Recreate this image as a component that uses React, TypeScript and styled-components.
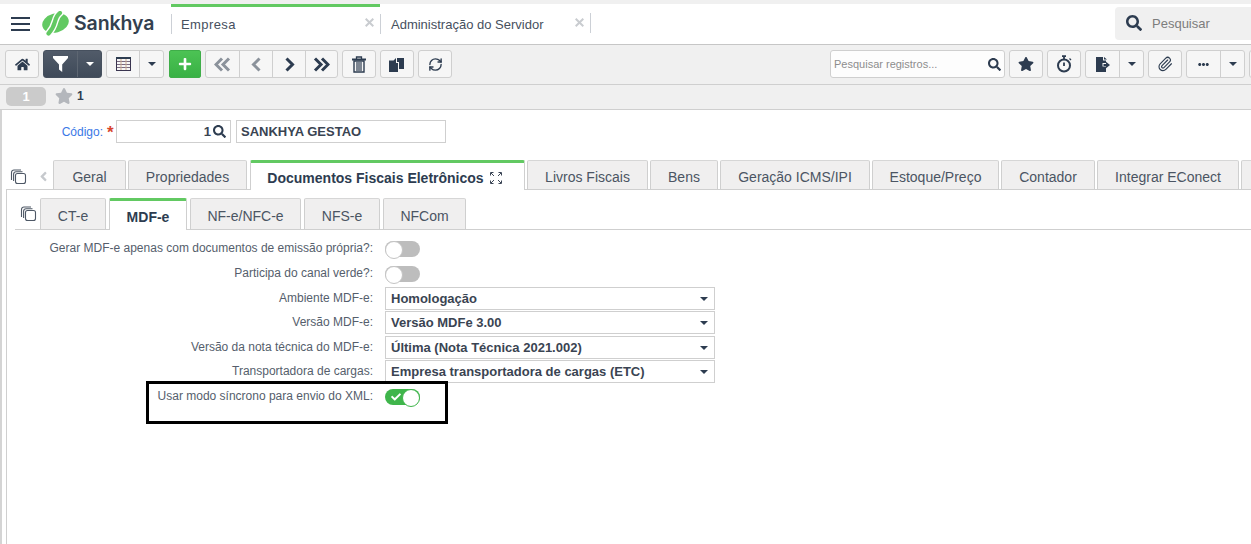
import React from "react";
import styled, { createGlobalStyle } from "styled-components";
import { FaHome, FaPlus, FaAngleLeft, FaStar, FaSearch, FaEllipsisH, FaCheck } from "react-icons/fa";
import { Paperclip, RefreshCw } from "lucide-react";

const Global = createGlobalStyle`
  html, body { margin: 0; padding: 0; background: #fff; }
  body { font-family: "Liberation Sans", Arial, sans-serif; overflow: hidden; }
  * { box-sizing: border-box; }
`;

const Page = styled.div`
  position: relative; width: 1251px; height: 544px; overflow: hidden; background: #fff;
  display: flex; flex-direction: column;
`;
const TopStrip = styled.div`height: 4px; background: #f0f0f0; flex: none;`;
const Header = styled.header`
  height: 41px; flex: none; background: #fff; border-bottom: 1px solid #c6c6c6;
  display: flex; align-items: center; padding-left: 11px;
`;
const Burger = styled.div`
  width: 19px; height: 14px; flex: none; margin-top: -1px;
  display: flex; flex-direction: column; justify-content: space-between;
  span { display: block; height: 2px; background: #2d3c50; }
`;
const Brand = styled.div`
  display: flex; align-items: center; margin-left: 12px; width: 129px; flex: none; gap: 5px; margin-top: -2px;
`;
const BrandName = styled.span`
  font-family: "Inter", "Liberation Sans", sans-serif; font-weight: 600; font-size: 19.5px; color: #33404f; letter-spacing: -0.1px;
`;
const AppTab = styled.div<{ $active?: boolean; $w: number; $pad: number }>`
  width: ${p => p.$w}px; height: 40px; flex: none; position: relative;
  display: flex; align-items: center; padding-left: ${p => p.$pad}px; padding-bottom: 2px;
  font-size: 13px; color: #46505e; letter-spacing: ${p => (p.$active ? "0.4px" : "0")};
  border-top: 3px solid ${p => (p.$active ? "#62c962" : "transparent")};
  &::before { content: ""; position: absolute; left: 0; top: 7px; height: 20px; width: 1px; background: #ccd0d6; }
`;
const AppTabClose = styled.span`
  position: absolute; right: 6px; top: 11px; display: flex; color: #c9ccd0;
`;
const AppTabEnd = styled.div`width: 1px; height: 20px; background: #ccd0d6; flex: none; margin-top: -3px;`;
const GlobalSearch = styled.div`
  margin-left: auto; width: 136px; height: 33px; background: #f0f0f0; border-radius: 4px 0 0 4px;
  display: flex; align-items: center; padding-left: 11px; gap: 10px; color: #7d7d7d; font-size: 13px; margin-top: -2px;
  svg { color: #2d3c50; font-size: 16px; }
`;
const Toolbar = styled.div`
  height: 40px; flex: none; background: #f0f0f0; border-bottom: 1px solid #cfcfcf;
  display: flex; align-items: flex-start; padding: 5px 0 0 5px; overflow: hidden;
`;
const Tool = styled.button<{ $w?: number; $gap?: number }>`
  width: ${p => p.$w ?? 34}px; height: 28px; flex: none; padding: 0; margin-left: ${p => p.$gap ?? 0}px;
  background: #f6f6f6; border: 1px solid #cfcfcf; border-radius: 3px; color: #2d3c50; font-size: 14px;
  display: flex; align-items: center; justify-content: center;
`;
const Split = styled.div<{ $gap?: number; $dark?: boolean }>`
  display: flex; flex: none; height: 28px; margin-left: ${p => p.$gap ?? 0}px; border-radius: 3px;
  background: ${p => (p.$dark ? "linear-gradient(#515b69, #3f4a59)" : "#f6f6f6")};
  border: 1px solid ${p => (p.$dark ? "#46505e" : "#cfcfcf")};
`;
const SplitCell = styled.div<{ $w: number; $dark?: boolean; $first?: boolean }>`
  width: ${p => p.$w}px; display: flex; align-items: center; justify-content: center; font-size: 14px;
  color: ${p => (p.$dark ? "#fff" : "#2d3c50")};
  border-left: ${p => (p.$first ? "none" : `1px solid ${p.$dark ? "#5d6672" : "#cfcfcf"}`)};
`;
const Caret = styled.i<{ $light?: boolean }>`
  display: block; width: 0; height: 0; border-left: 4.5px solid transparent; border-right: 4.5px solid transparent;
  border-top: 4.5px solid ${p => (p.$light ? "#fff" : "#2d3c50")};
`;
const AddButton = styled.button`
  width: 32px; height: 28px; flex: none; margin-left: 5px; padding: 0; border: 1px solid #3fae49; border-radius: 2px;
  background: linear-gradient(#4cc354, #39b145); color: #fff; font-size: 14px;
  display: flex; align-items: center; justify-content: center;
`;
const RecordSearch = styled.div`
  width: 175px; height: 28px; flex: none; margin-left: 378px; background: #fdfdfd; border: 1px solid #cfcfcf; border-radius: 3px;
  display: flex; align-items: center; justify-content: space-between; padding: 0 3px 0 3px;
  font-size: 11px; color: #8d8d8d; svg { color: #2d3c50; font-size: 13px; }
`;
const SubBar = styled.div`
  height: 25px; flex: none; background: #f0f0f0; border-bottom: 1px solid #cfcfcf;
  display: flex; align-items: center; padding-left: 6px; padding-bottom: 2px;
`;
const Pill = styled.div`
  width: 40px; height: 19px; background: #cbcbcb; border-radius: 5px; color: #fff; font-size: 13px;
  display: flex; align-items: center; justify-content: center; font-weight: bold;
`;
const Count = styled.span`
  display: flex; align-items: center; margin-left: 9px; gap: 4px; color: #2d3c50; font-size: 12px; font-weight: bold;
  svg { color: #b4b7bc; font-size: 18px; }
`;
const Content = styled.div`
  flex: 1; border-left: 2px solid #d4d4d4; display: flex; flex-direction: column; min-height: 0;
`;
const RecordRow = styled.div`
  display: flex; align-items: center; height: 23px; margin-top: 10px; flex: none;
`;
const CodeLabel = styled.label`
  width: 101px; text-align: right; font-size: 12px; color: #3a78e6;
`;
const Required = styled.span`
  width: 13px; color: #d8442e; font-size: 17px; font-weight: bold; line-height: 17px; height: 16px; padding-left: 4px;
`;
const Input = styled.div<{ $w: number; $gap?: number }>`
  width: ${p => p.$w}px; height: 23px; margin-left: ${p => p.$gap ?? 0}px; border: 1px solid #cfcfcf;
  display: flex; align-items: center; padding: 0 4px; font-size: 13px; font-weight: bold; color: #3a4452;
`;
const CodeInput = styled(Input)`
  justify-content: flex-end; gap: 2px; svg { font-size: 13px; color: #2d3c50; }
`;
const TabStrip = styled.div`
  display: flex; align-items: flex-end; height: 30px; margin-top: 17px; flex: none;
  border-bottom: 1px solid #cfcfcf; position: relative; margin-left: 4px; padding-left: 47px;
`;
const Tab = styled.div<{ $w: number; $active?: boolean; $gap?: number; $trail?: number }>`
  width: ${p => p.$w}px; flex: none; height: ${p => (p.$active ? 30 : 29)}px; margin-left: ${p => p.$gap ?? 2}px;
  display: flex; align-items: center; justify-content: center; padding-top: ${p => (p.$active ? 2 : 4)}px;
  padding-right: ${p => p.$trail ?? 0}px;
  font-size: 14px; color: ${p => (p.$active ? "#2d3c50" : "#4b5563")}; font-weight: ${p => (p.$active ? "bold" : "normal")};
  background: ${p => (p.$active ? "#fff" : "#f0efef")};
  border: 1px solid #cfcfcf; border-top: ${p => (p.$active ? "3px solid #62c962" : "1px solid #d6d6d6")};
  border-bottom: none; border-radius: 2px 2px 0 0; white-space: nowrap;
  margin-bottom: ${p => (p.$active ? "-1px" : "0")};
  svg { margin-left: 6px; }
`;
const StripIcons = styled.div`
  position: absolute; left: 4px; top: 8px; display: flex; align-items: center; gap: 9px;
`;
const ChevronMuted = styled.span`color: #c6c9cd; display: flex; font-size: 15px;`;
const Panel = styled.div`
  flex: 1; margin-left: 4px; border-left: 1px solid #cfcfcf; min-height: 0; display: flex; flex-direction: column;
`;
const SubStrip = styled(TabStrip)`
  height: 32px; margin-top: 8px; margin-left: 8px; padding-left: 25px;
`;
const SubTab = styled(Tab)`
  height: ${p => (p.$active ? 32 : 31)}px;
`;
const SubIcons = styled(StripIcons)`left: 5px; top: 7px;`;
const Fields = styled.div`padding-top: 7px; flex: none;`;
const FieldRow = styled.div<{ $h: number }>`
  height: ${p => p.$h}px; display: grid; grid-template-columns: 366px 330px; column-gap: 12px; align-items: start;
`;
const FieldLabel = styled.label`
  text-align: right; font-size: 12px; color: #555e6c; line-height: 23.5px; white-space: nowrap;
`;
const Select = styled.div`
  height: 23px; border: 1px solid #cfcfcf; background: #fff; display: flex; align-items: center; justify-content: space-between;
  padding: 0 6px 0 5px; font-size: 13px; font-weight: bold; color: #3a4452;
`;
const Switch = styled.div<{ $on?: boolean }>`
  position: relative; width: 35px; height: 16px; margin-top: 4px; border-radius: 8px;
  background: ${p => (p.$on ? "#3fb54b" : "#bdbdbd")};
  &::after {
    content: ""; position: absolute; top: 0; ${p => (p.$on ? "right: 0" : "left: 0")};
    width: 16px; height: 16px; border-radius: 50%; background: #fff; border: 1px solid ${p => (p.$on ? "#3fb54b" : "#c4c4c4")};
  }
  svg { position: absolute; left: 6px; top: 3px; color: #fff; font-size: 10px; }
`;
const Callout = styled.div`
  position: absolute; left: 146px; top: 381px; width: 302px; height: 43px; border: 3px solid #000; pointer-events: none;
`;

const GridIcon = () => (
  <svg width="15" height="14" viewBox="0 0 15 14" fill="none">
    <rect x="0.5" y="0.5" width="14" height="13" stroke="#3a3550" />
    <path d="M0 1h15" stroke="#2d3c50" strokeWidth="2" />
    <path d="M1 4.5h13M1 7.5h13M1 10.5h13" stroke="#7a6a80" strokeWidth="1" />
    <path d="M5 2v11M10 2v11" stroke="#c9a98f" strokeWidth="1" />
  </svg>
);
const FunnelIcon = () => (
  <svg width="15" height="16" viewBox="0 0 15 16">
    <path d="M0 0h15v2L9.2 8.5V16L6 13.5V8.5L0 2z" fill="#fff" />
  </svg>
);
const Chevrons = ({ dir, double, color }: { dir: "l" | "r"; double?: boolean; color: string }) => (
  <svg width="17" height="15" viewBox="0 0 17 15" fill="none" stroke={color} strokeWidth="3">
    <g transform={dir === "l" ? "translate(17 0) scale(-1 1)" : undefined}>
      {double ? (
        <>
          <path d="M2 1.5l6 6-6 6" />
          <path d="M9 1.5l6 6-6 6" />
        </>
      ) : (
        <path d="M5.5 1.5l6 6-6 6" />
      )}
    </g>
  </svg>
);
const TrashIcon = () => (
  <svg width="14" height="17" viewBox="0 0 14 17" fill="none" stroke="#2d3c50">
    <path d="M0 3.5h14" strokeWidth="2" />
    <path d="M4.5 3V1h5v2" strokeWidth="1.3" />
    <path d="M2 5h10v11H2z" strokeWidth="1.4" />
    <path d="M5 6v9M7 6v9M9 6v9" strokeWidth="1.2" />
  </svg>
);
const PagesIcon = () => (
  <svg width="16" height="15" viewBox="0 0 16 15" fill="#2d3c50">
    <path d="M0 3.5H4.5L7 1V6H9V15H0Z" />
    <path d="M8 1H15V12H10V5H8Z" />
  </svg>
);
const ClonesIcon = () => (
  <svg width="17" height="17" viewBox="0 0 17 17" fill="none" stroke="#4e5866" strokeWidth="1.1">
    <path d="M11 2H4a2.5 2.5 0 0 0-2.5 2.5V12" />
    <path d="M12.5 3.8H6A2.4 2.4 0 0 0 3.6 6.2V13" />
    <rect x="5.5" y="5.5" width="10" height="10" rx="2" fill="#fff" />
  </svg>
);
const Timer = () => (
  <svg width="17" height="18" viewBox="0 0 17 18" fill="none">
    <circle cx="8" cy="10.5" r="6" stroke="#2d3c50" strokeWidth="2" />
    <path d="M6 1.2h4M8 1.2v3M8 7.5v3.5" stroke="#2d3c50" strokeWidth="1.8" />
    <path d="M13.5 3.5l1.5 1.5" stroke="#2d3c50" strokeWidth="1.3" />
  </svg>
);
const ExportIcon = () => (
  <svg width="14" height="15" viewBox="0 0 14 15">
    <path d="M0 0h7l0 3.5h3V6H6.5v3.5H10V15H0z" fill="#2d3c50" />
    <path d="M8 0v2.5h3zM7.5 7H10V4.8L14 8l-4 3.2V9H7.5z" fill="#2d3c50" />
  </svg>
);
const Expand = () => (
  <svg width="12" height="12" viewBox="0 0 12 12" fill="none" stroke="#3c4656" strokeWidth="1">
    <path d="M0.5 3.5v-3h3M8.5 0.5h3v3M11.5 8.5v3h-3M3.5 11.5h-3v-3M1 1l3 3M11 1L8 4M11 11L8 8M1 11l3-3" />
  </svg>
);
const CloseMark = () => (
  <svg width="9" height="9" viewBox="0 0 9 9" fill="none" stroke="currentColor" strokeWidth="2">
    <path d="M.7.7l7.6 7.6M8.3.7L.7 8.3" />
  </svg>
);
const Logo = () => (
  <svg width="27" height="25" viewBox="0 0 27 25" fill="none" strokeLinecap="round">
    <ellipse cx="13.5" cy="12" rx="13.5" ry="9.5" transform="rotate(-15 13.5 12)" fill="#62c962" />
    <path d="M18 2C11 7 15.5 13 6.5 22.5" stroke="#fff" strokeWidth="7" />
    <path d="M18 2C11 7 15.5 13 6.5 22.5" stroke="#62c962" strokeWidth="4.2" />
  </svg>
);

const topTabs: [string, number][] = [
  ["Livros Fiscais", 121], ["Bens", 68], ["Geração ICMS/IPI", 150], ["Estoque/Preço", 127],
  ["Contador", 94], ["Integrar EConect", 142], ["", 40],
];
const subTabs: [string, number, boolean?][] = [
  ["CT-e", 66], ["MDF-e", 78, true], ["NF-e/NFC-e", 111], ["NFS-e", 76], ["NFCom", 83],
];
const selects: [string, string, number][] = [
  ["Ambiente MDF-e:", "Homologação", 24],
  ["Versão MDF-e:", "Versão MDFe 3.00", 25],
  ["Versão da nota técnica do MDF-e:", "Última (Nota Técnica 2021.002)", 24],
  ["Transportadora de cargas:", "Empresa transportadora de cargas (ETC)", 25],
];

export default function App() {
  return (
    <Page>
      <Global />
      <TopStrip />
      <Header>
        <Burger><span /><span /><span /></Burger>
        <Brand><Logo /><BrandName>Sankhya</BrandName></Brand>
        <AppTab $active $w={209} $pad={10}>Empresa<AppTabClose><CloseMark /></AppTabClose></AppTab>
        <AppTab $w={210} $pad={11}>Administração do Servidor<AppTabClose><CloseMark /></AppTabClose></AppTab>
        <AppTabEnd />
        <GlobalSearch><FaSearch />Pesquisar</GlobalSearch>
      </Header>
      <Toolbar>
        <Tool><FaHome size={15} /></Tool>
        <Split $dark $gap={4}>
          <SplitCell $first $dark $w={33}><FunnelIcon /></SplitCell>
          <SplitCell $dark $w={24}><Caret $light /></SplitCell>
        </Split>
        <Split $gap={4}>
          <SplitCell $first $w={32}><GridIcon /></SplitCell>
          <SplitCell $w={24}><Caret /></SplitCell>
        </Split>
        <AddButton><FaPlus /></AddButton>
        <Split $gap={4}>
          <SplitCell $first $w={33}><Chevrons dir="l" double color="#8b929b" /></SplitCell>
          <SplitCell $w={33}><Chevrons dir="l" color="#8b929b" /></SplitCell>
          <SplitCell $w={33}><Chevrons dir="r" color="#2d3c50" /></SplitCell>
          <SplitCell $w={32}><Chevrons dir="r" double color="#2d3c50" /></SplitCell>
        </Split>
        <Tool $gap={4}><TrashIcon /></Tool>
        <Tool $gap={4}><PagesIcon /></Tool>
        <Tool $gap={4}><RefreshCw size={15} strokeWidth={2.2} /></Tool>
        <RecordSearch>Pesquisar registros...<FaSearch /></RecordSearch>
        <Tool $gap={4}><FaStar size={16} /></Tool>
        <Tool $gap={4}><Timer /></Tool>
        <Split $gap={4}>
          <SplitCell $first $w={33}><ExportIcon /></SplitCell>
          <SplitCell $w={24}><Caret /></SplitCell>
        </Split>
        <Tool $gap={4}><Paperclip size={16} strokeWidth={1.7} /></Tool>
        <Split $gap={4}>
          <SplitCell $first $w={33}><FaEllipsisH size={11} /></SplitCell>
          <SplitCell $w={24}><Caret /></SplitCell>
        </Split>
        <Tool $gap={4} $w={20} />
      </Toolbar>
      <SubBar>
        <Pill>1</Pill>
        <Count><FaStar />1</Count>
      </SubBar>
      <Content>
        <RecordRow>
          <CodeLabel>Código:</CodeLabel>
          <Required>*</Required>
          <CodeInput $w={115}>1<FaSearch /></CodeInput>
          <Input $w={210} $gap={5}>SANKHYA GESTAO</Input>
        </RecordRow>
        <TabStrip>
          <StripIcons><ClonesIcon /><ChevronMuted><FaAngleLeft /></ChevronMuted></StripIcons>
          <Tab $w={73} $gap={0}>Geral</Tab>
          <Tab $w={119}>Propriedades</Tab>
          <Tab $w={275} $active $gap={3} $trail={6}>Documentos Fiscais Eletrônicos<Expand /></Tab>
          {topTabs.map(([t, w]) => <Tab key={t || "more"} $w={w}>{t}</Tab>)}
        </TabStrip>
        <Panel>
          <SubStrip>
            <SubIcons><ClonesIcon /></SubIcons>
            {subTabs.map(([t, w, a], i) => (
              <SubTab key={t} $w={w} $active={a} $gap={i === 0 ? 0 : 3}>{t}</SubTab>
            ))}
          </SubStrip>
          <Fields>
            <FieldRow $h={25}>
              <FieldLabel>Gerar MDF-e apenas com documentos de emissão própria?:</FieldLabel>
              <Switch />
            </FieldRow>
            <FieldRow $h={25}>
              <FieldLabel>Participa do canal verde?:</FieldLabel>
              <Switch />
            </FieldRow>
            {selects.map(([l, v, h]) => (
              <FieldRow key={l} $h={h}>
                <FieldLabel>{l}</FieldLabel>
                <Select>{v}<Caret /></Select>
              </FieldRow>
            ))}
            <FieldRow $h={22}>
              <FieldLabel>Usar modo síncrono para envio do XML:</FieldLabel>
              <Switch $on><FaCheck /></Switch>
            </FieldRow>
          </Fields>
        </Panel>
      </Content>
      <Callout />
    </Page>
  );
}
